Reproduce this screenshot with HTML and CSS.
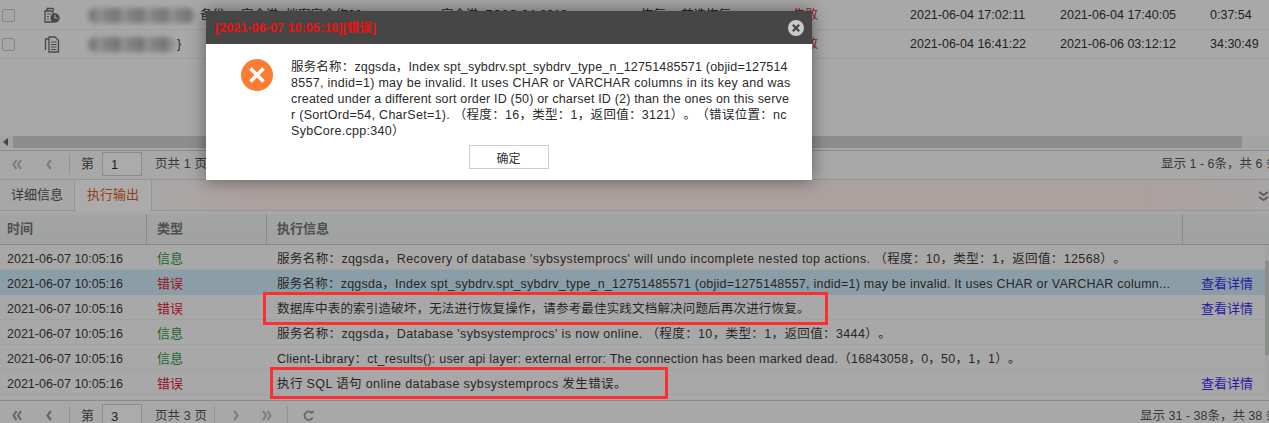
FILE: index.html
```html
<!DOCTYPE html>
<html lang="zh-CN">
<head>
<meta charset="utf-8">
<title>执行输出</title>
<link rel="stylesheet" href="styles.css">
</head>
<body>
<div class="app">
  <section class="jobs">
    <div class="job">
      <span class="check"></span>
      <svg class="doc" viewBox="0 0 16 17"><path d="M2 3.500h1V1.500h6l1 1.500M1 4h8v11H1z" fill="none" stroke="#6b6b6b" stroke-width="1.300"/><path d="M3 7h4M3 9.500h2M3 12h2" stroke="#6b6b6b"/><circle cx="11" cy="11" r="4.700" fill="#6b6b6b"/><path d="M11 8v3h3" stroke="#ececec" stroke-width="1.200" fill="none"/></svg>
      <span class="name"><span class="smudge wide"></span><span class="name-tail">备份</span></span>
      <span>安全港_档案安全作00</span>
      <span>安全港_7C2C-04-2013</span>
      <span class="mode"><span>恢复</span><span>首选恢复</span></span>
      <span class="state">失败</span>
      <span>2021-06-04 17:02:11</span>
      <span>2021-06-04 17:40:05</span>
      <span>0:37:54</span>
    </div>
    <div class="job">
      <span class="check"></span>
      <svg class="doc" viewBox="0 0 16 17"><path d="M1.500 14V3h3M5 1h6l3.500 3.500V16H5z" fill="none" stroke="#6b6b6b" stroke-width="1.300"/><path d="M7 6h5.500M7 8.500h5.500M7 11h5.500M7 13.500h5.500" stroke="#6b6b6b"/></svg>
      <span class="name"><span class="smudge short"></span><span class="name-brace">}</span></span>
      <span></span>
      <span></span>
      <span></span>
      <span class="state">失败</span>
      <span>2021-06-04 16:41:22</span>
      <span>2021-06-06 03:12:12</span>
      <span>34:30:49</span>
    </div>
    <div class="jobs-fill"></div>
    <div class="hscroll">
      <svg class="hscroll-arrow" viewBox="0 0 5 8"><path d="M5 0v8L0 4z" fill="#666"/></svg>
      <span class="hscroll-thumb"></span>
    </div>
  </section>

  <nav class="pager pager-top">
    <svg class="pg-dbl first" viewBox="0 0 10 11"><path d="M4.500 1L1.500 5.500l3 4.500M9 1L6 5.500l3 4.500" fill="none" stroke="#bdbdbd" stroke-width="2.200"/></svg>
    <svg class="pg-sgl prev" viewBox="0 0 6 11"><path d="M4.800 1L1.500 5.500l3.300 4.500" fill="none" stroke="#bdbdbd" stroke-width="2.200"/></svg>
    <span class="pg-sep"></span>
    <span class="pg-di">第</span>
    <span class="pg-input">1</span>
    <span class="pg-total">页共 1 页</span>
    <span class="pg-info info-top">显示 1 - 6条，共 6 条</span>
  </nav>

  <div class="tabs">
    <span class="tab">详细信息</span>
    <span class="tab tab-on">执行输出</span>
    <svg class="tabs-more" viewBox="0 0 11 10"><path d="M1 1l4.500 3L10 1M1 6l4.500 3L10 6" fill="none" stroke="#8a8a8a" stroke-width="2"/></svg>
  </div>

  <section class="log">
    <div class="log-head">
      <span class="th">时间</span><span class="th">类型</span><span class="th">执行信息</span><span class="th"></span>
    </div>
    <div class="log-body">
      <div class="row">
        <span class="c-time">2021-06-07 10:05:16</span><span class="c-type info">信息</span>
        <span class="c-msg loose">服务名称：zqgsda，Recovery of database 'sybsystemprocs' will undo incomplete nested top actions. （程度：10，类型：1，返回值：12568）。</span><span></span>
      </div>
      <div class="row row-sel">
        <span class="c-time">2021-06-07 10:05:16</span><span class="c-type err">错误</span>
        <span class="c-msg snug">服务名称：zqgsda，Index spt_sybdrv.spt_sybdrv_type_n_12751485571 (objid=1275148557, indid=1) may be invalid. It uses CHAR or VARCHAR column...</span><a class="c-link">查看详情</a>
      </div>
      <div class="row">
        <span class="c-time">2021-06-07 10:05:16</span><span class="c-type err">错误</span>
        <span class="c-msg">数据库中表的索引造破坏，无法进行恢复操作，请参考最佳实践文档解决问题后再次进行恢复。</span><a class="c-link">查看详情</a>
      </div>
      <div class="row">
        <span class="c-time">2021-06-07 10:05:16</span><span class="c-type info">信息</span>
        <span class="c-msg loose">服务名称：zqgsda，Database 'sybsystemprocs' is now online. （程度：10，类型：1，返回值：3444）。</span><span></span>
      </div>
      <div class="row">
        <span class="c-time">2021-06-07 10:05:16</span><span class="c-type info">信息</span>
        <span class="c-msg snug">Client-Library：ct_results(): user api layer: external error: The connection has been marked dead.（16843058，0，50，1，1）。</span><span></span>
      </div>
      <div class="row">
        <span class="c-time">2021-06-07 10:05:16</span><span class="c-type err">错误</span>
        <span class="c-msg loose">执行 SQL 语句 online database sybsystemprocs 发生错误。</span><a class="c-link">查看详情</a>
      </div>
      <div class="vscroll"><span class="vscroll-thumb"></span></div>
    </div>
  </section>

  <nav class="pager pager-bottom">
    <svg class="pg-dbl first" viewBox="0 0 10 11"><path d="M4.500 1L1.500 5.500l3 4.500M9 1L6 5.500l3 4.500" fill="none" stroke="#9c9c9c" stroke-width="2.200"/></svg>
    <svg class="pg-sgl prev" viewBox="0 0 6 11"><path d="M4.800 1L1.500 5.500l3.300 4.500" fill="none" stroke="#9c9c9c" stroke-width="2.200"/></svg>
    <span class="pg-sep"></span>
    <span class="pg-di">第</span>
    <span class="pg-input">3</span>
    <span class="pg-total">页共 3 页</span>
    <span class="pg-sep sep-b"></span>
    <svg class="pg-sgl next" viewBox="0 0 6 11"><path d="M1.200 1l3.300 4.500L1.200 10" fill="none" stroke="#bdbdbd" stroke-width="2.200"/></svg>
    <svg class="pg-dbl last" viewBox="0 0 10 11"><path d="M1 1l3 4.500L1 10M5.500 1l3 4.500-3 4.500" fill="none" stroke="#bdbdbd" stroke-width="2.200"/></svg>
    <span class="pg-sep sep-c"></span>
    <svg class="pg-refresh" viewBox="0 0 12 12"><path d="M10 3.500A4.600 4.600 0 1 0 10.500 8" fill="none" stroke="#9c9c9c" stroke-width="2"/><path d="M7 3.500h4.500V0z" fill="#9c9c9c"/></svg>
    <span class="pg-info info-bottom">显示 31 - 38条，共 38 条</span>
  </nav>
</div>

<div class="mask"></div>

<div class="mark mark-one"></div>
<div class="mark mark-two"></div>

<div class="dialog">
  <header class="dialog-head">
    <span class="dialog-title">[2021-06-07 10:05:16][错误]</span>
    <svg class="dialog-close" viewBox="0 0 16 16"><circle cx="8" cy="8" r="8" fill="#c9c9c9"/><path d="M4.800 4.800l6.400 6.400M11.200 4.800l-6.400 6.400" stroke="#444" stroke-width="2.200"/></svg>
  </header>
  <div class="dialog-body">
    <svg class="dialog-icon" viewBox="0 0 32 32"><circle cx="16" cy="16" r="16" fill="#fa7d33"/><path d="M9.500 9.500l13 13M22.500 9.500l-13 13" stroke="#fff" stroke-width="3.600"/></svg>
    <p class="dialog-text"><span class="dl">服务名称：zqgsda，Index spt_sybdrv.spt_sybdrv_type_n_12751485571 (objid=127514</span><span class="dl dl-wide">8557, indid=1) may be invalid. It uses CHAR or VARCHAR columns in its key and was</span><span class="dl">created under a different sort order ID (50) or charset ID (2) than the ones on this serve</span><span class="dl dl-wide">r (SortOrd=54, CharSet=1). （程度：16，类型：1，返回值：3121）。（错误位置：nc</span><span class="dl dl-wide">SybCore.cpp:340）</span></p>
  </div>
  <div class="dialog-foot"><button class="dialog-ok">确定</button></div>
</div>
</body>
</html>
```

FILE: styles.css
```css
* { box-sizing: border-box; }
html, body { margin: 0; height: 100%; overflow: hidden; }
body {
  position: relative;
  width: 1269px;
  height: 423px;
  background: #fdfbfb;
  color: #333;
  font: 12.500px/16px "Liberation Sans", "Noto Sans CJK SC", sans-serif;
  text-spacing-trim: space-all;
}
.app { display: flex; flex-direction: column; height: 423px; overflow: hidden; }

/* upper job list */
.jobs { height: 150px; display: flex; flex-direction: column; flex: none; padding-top: 1px; }
.job {
  height: 29px;
  flex: none;
  display: grid;
  grid-template-columns: 44px 44px 153px 200px 200px 152px 117px 150px 150px 1fr;
  align-items: center;
  border-bottom: 1px solid #ececec;
  white-space: nowrap;
  line-height: 27px;
}
.check { margin: 1px 0 0 2px; width: 13px; height: 13px; border: 1px solid #c6c6c6; border-radius: 2px; background: #fafafa; }
.doc { width: 16px; height: 17px; }
.name { display: flex; align-items: center; }
.smudge {
  height: 15px;
  border-radius: 7px;
  filter: blur(2.500px);
  background: repeating-linear-gradient(90deg, #b4b4b4 0 8px, #d4d4d4 8px 16px, #c0c0c0 16px 24px);
}
.wide { width: 107px; margin-right: 5px; }
.short { width: 88px; margin-right: 1px; }
.mode { display: flex; gap: 15px; }
.state { color: #d8243a; }
.jobs-fill { flex: 1; }
.hscroll { height: 12px; margin-bottom: 2px; flex: none; display: flex; align-items: center; background: #f4f4f4; padding-left: 3px; }
.hscroll-arrow { width: 5px; height: 8px; flex: none; }
.hscroll-thumb { height: 12px; width: 1229px; margin-left: 5px; background: #d1d4d0; }

/* pagers */
.pager {
  flex: none;
  display: flex;
  align-items: center;
  border-top: 1px solid #d0d0d0;
  padding-left: 12px;
  white-space: nowrap;
  color: #555;
}
.pager-top { height: 30px; border-bottom: 1px solid #d8d8d8; padding-bottom: 2px; }
.pager-bottom { height: 30px; }
.pg-dbl { width: 10px; height: 11px; flex: none; }
.pg-sgl { width: 6px; height: 11px; flex: none; }
.first { margin-right: 24px; }
.prev { margin-right: 17px; }
.next { margin-left: 18px; }
.last { margin-left: 23px; }
.pg-sep { width: 1px; height: 20px; background: #dcdcdc; margin-right: 11px; flex: none; }
.sep-b { margin: 0 0 0 7px; }
.sep-c { margin: 0 0 0 15px; }
.pg-di { width: 21px; flex: none; font-size: 13px; }
.pg-input { width: 40px; height: 24px; border: 1px solid #cfcfcf; background: #fff; padding: 4px 0 0 8px; color: #333; margin-right: 13px; flex: none; font-size: 13px; }
.pg-total { width: 52px; flex: none; letter-spacing: .1px; }
.pg-refresh { width: 11px; height: 11px; margin-left: 15px; flex: none; }
.pg-info { flex: none; }
.info-top { margin-left: 954px; }
.info-bottom { margin-left: 826px; }

/* tabs */
.tabs {
  flex: none;
  height: 31px;
  display: flex;
  align-items: stretch;
  position: relative;
  border-bottom: 1px solid #ddd;
  background: linear-gradient(90deg, #fdfbfb 10%, #fff0ee 20%, #fff0ee 90%, #fbf6f6);
}
.tab { width: 75px; line-height: 30px; text-align: center; border-right: 1px solid #e0e0e0; background: #fafafa; color: #555; font-size: 13px; }
.tab-on { width: 77px; color: #d9601a; background: #fff; height: 31px; }
.tabs-more { position: absolute; right: 0; top: 11px; width: 11px; height: 10px; }

/* log table */
.log { flex: none; height: 189px; padding-top: 3px; }
.log-head {
  height: 31px;
  display: grid;
  grid-template-columns: 147px 120px 916px 86px;
  background: linear-gradient(#f3f6f4, #f0f2f0);
  border-bottom: 1px solid #c8c8c8;
}
.th { padding-left: 7px; line-height: 30px; font-weight: bold; color: #777; font-size: 13px; border-right: 1px solid #ccc; }
.th:nth-child(n+2) { padding-left: 10px; }
.th:last-child { border-right: 0; }
.log-body { position: relative; }
.row {
  height: 25px;
  display: grid;
  grid-template-columns: 146px 120px 916px 83px;
  align-items: center;
  padding-top: 3px;
  border-bottom: 1px solid #f1f1f1;
  white-space: nowrap;
  width: 1265px;
}
.row-sel { background: #d0ecfb; border-bottom-color: #d0ecfb; }
.c-time { padding-left: 7px; color: #3a3a3a; }
.c-type { padding-left: 11px; font-size: 13px; }
.info { color: #2f9a3d; }
.err { color: #e21e32; }
.c-msg { padding-left: 11px; letter-spacing: .18px; overflow: hidden; color: #3a3a3a; }
.loose { letter-spacing: .38px; }
.snug { letter-spacing: .23px; }
.c-link { padding-left: 19px; color: #3b2ff0; font-size: 13px; }
.vscroll { position: absolute; right: 0; top: 0; width: 4px; height: 150px; background: #f4f4f4; padding-top: 16px; }
.vscroll-thumb { display: block; height: 94px; background: #d1d4d0; }

/* modal */
.mask { position: absolute; inset: 0; background: rgba(0, 0, 0, .33); }
.mark { position: absolute; border: 3px solid #ff2e2e; }
.mark-one { left: 263px; top: 292px; width: 565px; height: 33px; }
.mark-two { left: 270px; top: 367px; width: 398px; height: 32px; }
.dialog {
  position: absolute;
  left: 206px;
  top: 11px;
  width: 606px;
  height: 169px;
  background: #fff;
  box-shadow: 0 0 16px rgba(0, 0, 0, .45);
  display: flex;
  flex-direction: column;
}
.dialog-head { height: 33px; flex: none; background: #464646; display: flex; align-items: center; justify-content: space-between; padding: 0 8px 0 9px; }
.dialog-title { color: #f01010; font-size: 12.500px; font-weight: bold; letter-spacing: .08px; }
.dialog-close { width: 16px; height: 16px; }
.dialog-body { flex: 1; display: flex; padding: 15px 0 0 35px; }
.dialog-icon { width: 32px; height: 32px; flex: none; margin-right: 18px; }
.dialog-text { margin: 0; white-space: nowrap; color: #2a2a2a; letter-spacing: .18px; line-height: 16px; }
.dl { display: block; }
.dl-wide { letter-spacing: .29px; }
.dialog-foot { display: flex; justify-content: center; padding-bottom: 11px; padding-right: 1px; }
.dialog-ok { width: 80px; height: 24px; border: 1px solid #ccc; background: #fff; color: #333; font: 12px "Liberation Sans", "Noto Sans CJK SC", sans-serif; padding: 0; }
```
